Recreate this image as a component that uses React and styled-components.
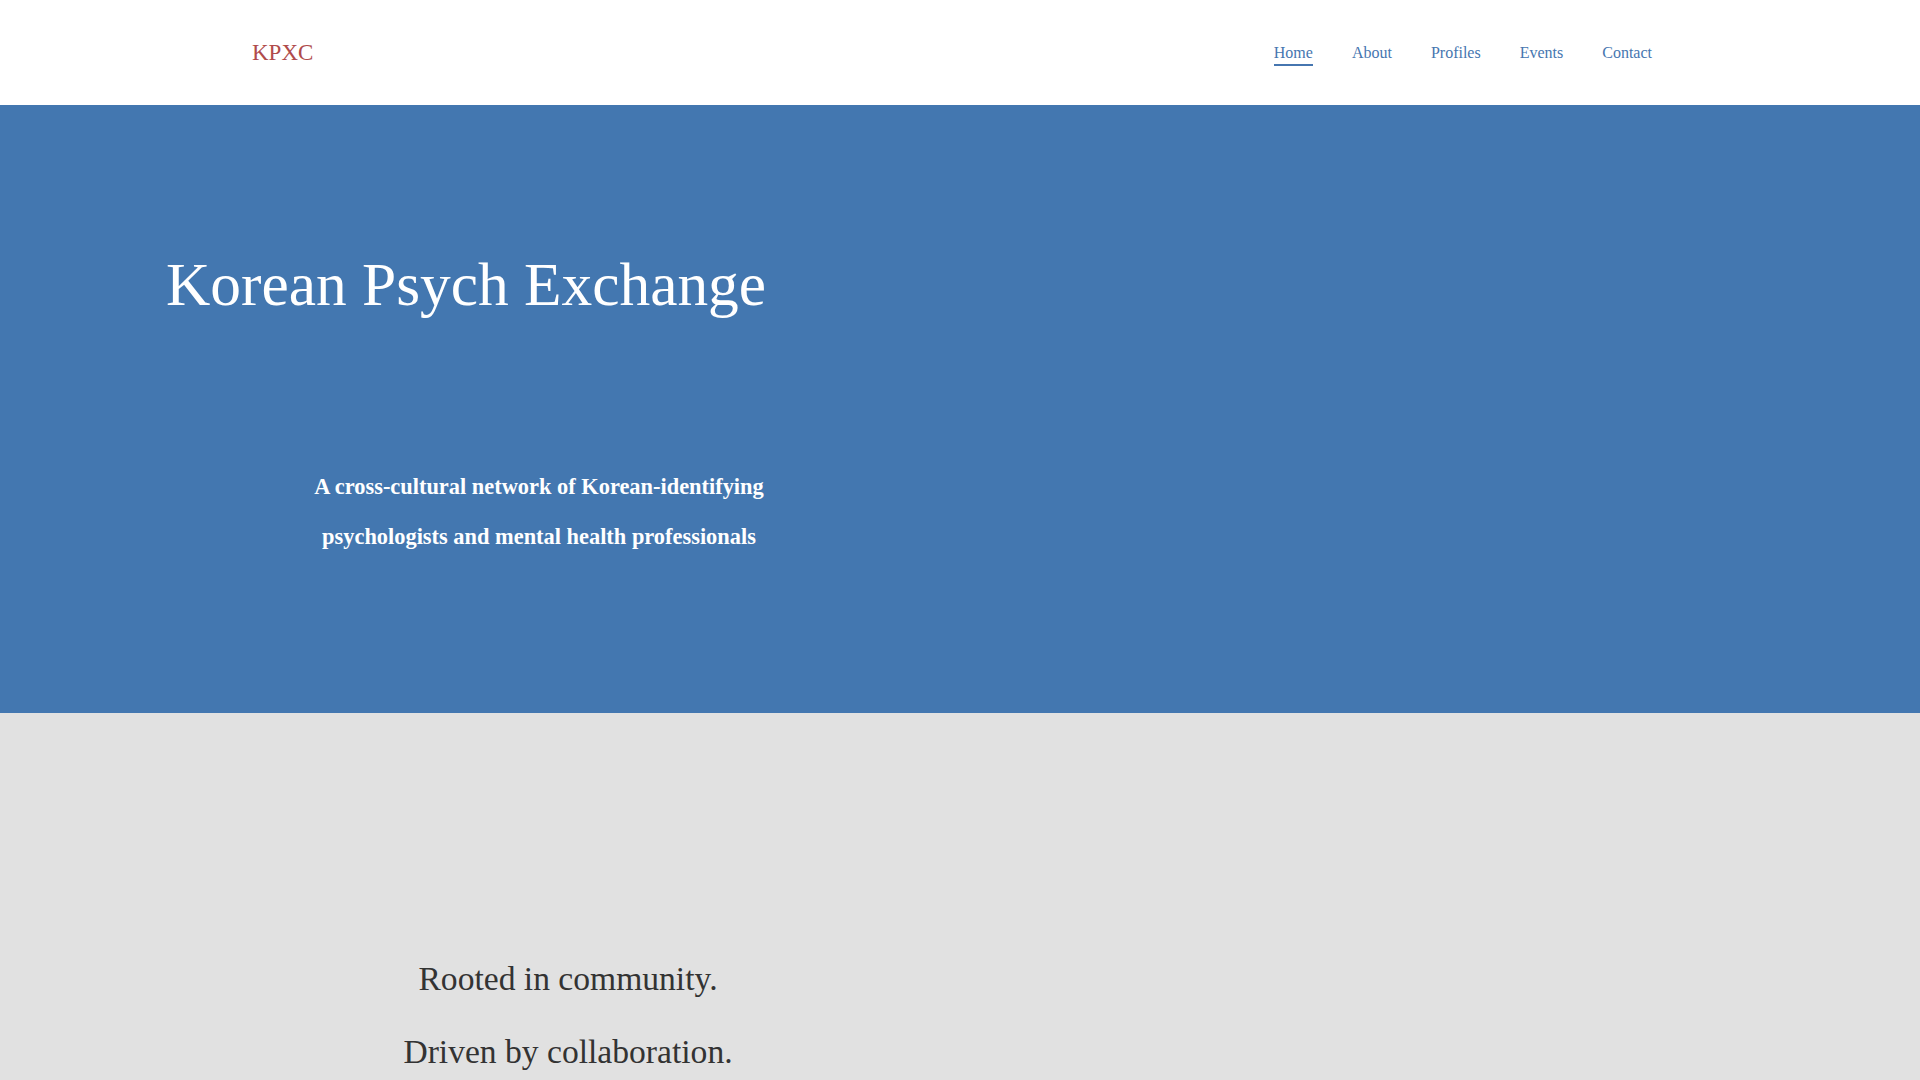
import React from 'react'
import styled, { createGlobalStyle } from 'styled-components'

const GlobalStyle = createGlobalStyle`
  html, body {
    margin: 0;
    padding: 0;
    background: #ffffff;
    font-family: "Liberation Serif", "Times New Roman", serif;
  }
  * {
    box-sizing: border-box;
  }
`

const Header = styled.header`
  display: flex;
  align-items: center;
  justify-content: space-between;
  height: 105px;
  padding: 0 268px 0 252px;
  background: #ffffff;
`

const Logo = styled.a`
  color: #b04b4b;
  font-size: 23px;
  text-decoration: none;
`

const Nav = styled.nav`
  display: flex;
  align-items: center;
  gap: 39px;
`

const NavLink = styled.a`
  color: #4676b0;
  font-size: 16px;
  line-height: 18px;
  text-decoration: none;
  padding: 2px 0 2px;
  border-bottom: 2px solid ${props => (props.active ? '#4676b0' : 'transparent')};
  margin-top: 2px;
`

const Hero = styled.section`
  background: #4377b0;
  height: 608px;
  padding: 142px 166px 0;
  color: #ffffff;
`

const Column = styled.div`
  width: ${props => props.width}px;
`

const Title = styled.h1`
  margin: 0;
  font-size: 61.4px;
  font-weight: normal;
  line-height: 74px;
`

const Tagline = styled.p`
  margin: 141px 0 0;
  font-size: 22.4px;
  font-weight: bold;
  line-height: 50px;
  text-align: center;
`

const Band = styled.section`
  background: #e1e1e1;
  padding: 229px 166px 1180px;
`

const Motto = styled.p`
  margin: 0;
  font-size: 33.6px;
  line-height: 73px;
  color: #333333;
  text-align: center;
`

export default function App() {
  const links = ['Home', 'About', 'Profiles', 'Events', 'Contact']
  return (
    <>
      <GlobalStyle />
      <Header>
        <Logo href="#">KPXC</Logo>
        <Nav>
          {links.map(l => (
            <NavLink key={l} href="#" active={l === 'Home'}>{l}</NavLink>
          ))}
        </Nav>
      </Header>
      <Hero>
        <Column width={746}>
          <Title>Korean Psych Exchange</Title>
          <Tagline>
            A cross-cultural network of Korean-identifying
            <br />
            psychologists and mental health professionals
          </Tagline>
        </Column>
      </Hero>
      <Band>
        <Column width={804}>
          <Motto>Rooted in community.</Motto>
          <Motto>Driven by collaboration.</Motto>
        </Column>
      </Band>
    </>
  )
}
